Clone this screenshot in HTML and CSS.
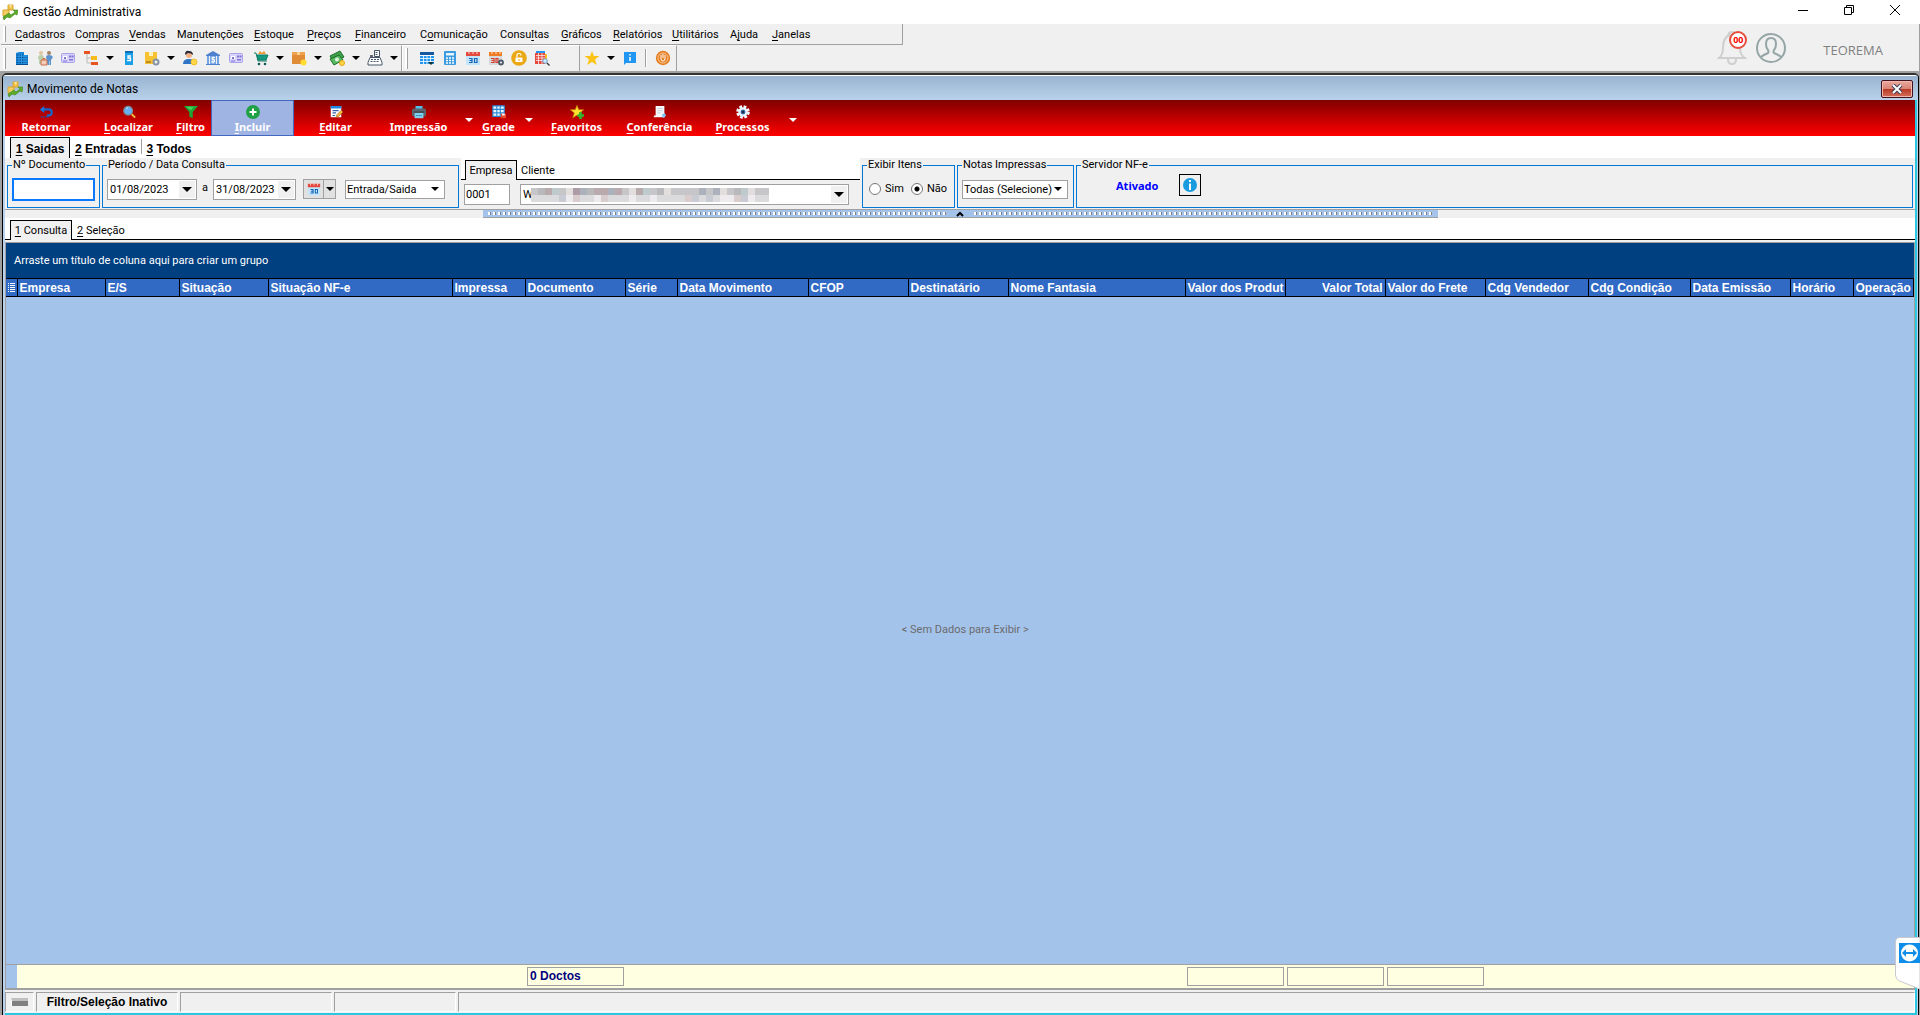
FILE: index.html
```html
<!DOCTYPE html>
<html lang="pt-BR">
<head>
<meta charset="utf-8">
<title>Gestão Administrativa</title>
<link rel="stylesheet" href="styles.css">
</head>
<body>
<svg class="defs" aria-hidden="true">
  <symbol id="logo" viewBox="0 0 16 16"><path d="M6 1h5v5H6z" fill="#f0c24a" stroke="#d9a52c"/><path d="M1 6h6v6H1z" fill="#f3cd62" stroke="#d9a52c"/><path d="M7 1h3l-1 3z" fill="#fbe7a6"/><path d="M1 13l6-4 2 2 4-3-2-2 5 0-1 5-2-1-5 4-3-1-3 3z" fill="#5dab2b" stroke="#3c8418" stroke-width=".6"/></symbol>
  <symbol id="building" viewBox="0 0 16 16"><path d="M2 3l3-1h5v3h4v9H2z" fill="#1487d8"/><path d="M2.500 5h7M2.500 7.500h11M2.500 10h11M2.500 12.500h11" stroke="#0a4c94"/><path d="M5 4v9M7.500 4v9M10 5v9M12 5v9" stroke="#3aa4ec" stroke-width=".8"/><path d="M2 14.500h12" stroke="#0a4c94"/></symbol>
  <symbol id="people" viewBox="0 0 16 16"><circle cx="4" cy="3" r="2" fill="#e0c6a0"/><circle cx="12" cy="3" r="2" fill="#a58463"/><path d="M1 8q0-3 3-3t3 3v6H2v-4z" fill="#b9cfae"/><path d="M9 7q0-2 3-2t4 2l-2 3v5h-1.500v-4H12v4h-1.500z" fill="#5b93cf"/><path d="M4 10h6v5H4z" fill="#f5cdb8" stroke="#c96f4c"/><path d="M6 10V8.500h2V10" fill="none" stroke="#c96f4c"/></symbol>
  <symbol id="card" viewBox="0 0 16 16"><rect x="1.500" y="3.500" width="13" height="9" rx="1" fill="#d6d2fb" stroke="#a8a2ea"/><path d="M3 6h4v3H3z" fill="#fff"/><path d="M4 7h2v2H4zM9 5.500h2.500v2H9zM12 5.500h1.500v2H12zM9 9h4v1.500H9z" fill="#7d76cf"/><path d="M3 11h4" stroke="#7d76cf"/></symbol>
  <symbol id="tree" viewBox="0 0 16 16"><path d="M4 4v9h5M4 8h5" fill="none" stroke="#b9b9b9"/><path d="M1 1h6v3H1zM8 12h7v3H8z" fill="#e8541f"/><path d="M8 6h6v4H8z" fill="#f6bb1c"/></symbol>
  <symbol id="price" viewBox="0 0 16 16"><path d="M4 1h8v14H4z" fill="#1b9fe8"/><path d="M4 1h8v2H4z" fill="#0b6fb8"/><path d="M10 6H7v2h2.500v2.500H6" fill="none" stroke="#fff" stroke-width="1.300"/></symbol>
  <symbol id="boxgear" viewBox="0 0 16 16"><path d="M1 2h12v12H1z" fill="#f7c232"/><path d="M5 2h4v4H5z" fill="#fff2bd"/><path d="M2 12h5" stroke="#7a5a12"/><circle cx="12" cy="12" r="2.500" fill="#eee" stroke="#8793a5" stroke-width="2"/></symbol>
  <symbol id="personcoin" viewBox="0 0 16 16"><circle cx="7" cy="5" r="3" fill="#f4b183"/><path d="M3 5q0-5 4-4 4 0 4 4-2-2-5-2z" fill="#2c2c3c"/><path d="M1 14q0-5 6-5t6 5z" fill="#2e75c8"/><circle cx="12" cy="12" r="3" fill="#ffd54a" stroke="#f3bd2c"/></symbol>
  <symbol id="bank" viewBox="0 0 16 16"><path d="M1 5l7-4 7 4v1H1zM1 14h14v1H1z" fill="#4e82cf"/><path d="M2 6h2v8H2zM12 6h2v8h-2zM5 6h6v8H5z" fill="#72a3e4"/><path d="M10 7.500H7v2h2.500v2.500H6M8 6.500v7" fill="none" stroke="#fff"/></symbol>
  <symbol id="cart" viewBox="0 0 16 16"><path d="M5 4l2-3 2 2 2-2 2 3z" fill="#f0962e"/><path d="M1 3h2l2 8h9" fill="none" stroke="#0f7d67"/><path d="M4 5h11l-2 5H5z" fill="#159a80" stroke="#0f7d67"/><circle cx="6" cy="14" r="1.300" fill="#155"/><circle cx="12" cy="14" r="1.300" fill="#155"/></symbol>
  <symbol id="boxcoin" viewBox="0 0 16 16"><path d="M1 2h13v12H1z" fill="#e08b35"/><path d="M1 2h13v3H1z" fill="#efa24e"/><path d="M6 2h3v3H6z" fill="#f9cf90"/><circle cx="12.500" cy="12.500" r="3" fill="#ffdc2e"/></symbol>
  <symbol id="money" viewBox="0 0 16 16"><path d="M1 6l10-5 4 6-10 6z" fill="#3fa24a" stroke="#1f6e2c"/><path d="M1 9l9-4 4 5-9 5z" fill="#57b960" stroke="#1f6e2c"/><circle cx="8" cy="9.500" r="2" fill="#dff3df"/><circle cx="13" cy="13" r="2.500" fill="#ffd54a" stroke="#e8a812"/></symbol>
  <symbol id="register" viewBox="0 0 16 16"><path d="M7.500.5h5v6h-5zM3 7.500h10l2 5v2.500H1v-2.500z" fill="#fff" stroke="#445568"/><path d="M8.500 2.500h3M8.500 4.500h3M4 9.500h8M3.500 11.500h9" stroke="#445568" stroke-dasharray="2 1"/><path d="M3 5h3v2H3z" fill="#667"/></symbol>
  <symbol id="calblue" viewBox="0 0 16 16"><path d="M1 2h14v3H1z" fill="#17599f"/><path d="M1 6h14v8H1z" fill="#2196f3"/><path d="M1 5.500h14M1 8.500h14M1 11.500h14M4.500 6v8M8 6v8M11.500 6v8" stroke="#fff" stroke-width=".8"/><path d="M9 12h6l-3 3z" fill="#133"/></symbol>
  <symbol id="calc" viewBox="0 0 16 16"><rect x="2" y="1" width="12" height="14" rx="1" fill="#3d9be0"/><path d="M4 3h8v2.500H4z" fill="#e6f5ff"/><path d="M4 8h8M4 10.500h8M4 13h8" stroke="#fff" stroke-width="1.500" stroke-dasharray="2 1"/></symbol>
  <symbol id="cal30" viewBox="0 0 16 16"><path d="M1 5h14v10H1z" fill="#c4e4f9"/><path d="M1 2h14v4H1z" fill="#e5483c"/><path d="M4 1v3M8 1v3M12 1v3" stroke="#f6d2cf"/><path d="M4 8.500h3v4H4M4.500 10.500H7M9.500 8.500h2.500v4H9.500z" fill="none" stroke="#1565b5" stroke-width="1.200"/></symbol>
  <symbol id="cal30gear" viewBox="0 0 16 16"><path d="M1 5h13v10H1z" fill="#d6d9dc"/><path d="M1 2h13v4H1z" fill="#ef7b22"/><path d="M4 1v3M8 1v3M12 1v3" stroke="#fbdcc0"/><path d="M3 8.500h3v4H3M3.500 10.500H6M8 8.500h2v4H8z" fill="none" stroke="#d93c2b" stroke-width="1.200"/><circle cx="13" cy="12.500" r="2" fill="#eee" stroke="#4a5a68" stroke-width="1.800"/></symbol>
  <symbol id="lock" viewBox="0 0 16 16"><circle cx="8" cy="8" r="7.800" fill="#e9a814"/><path d="M4.500 7.500h7v4.500h-7z" fill="#fff"/><path d="M6 7V5.500q0-2 2-2t2 2" fill="none" stroke="#fff" stroke-width="1.200"/><path d="M8 9v2" stroke="#e9a814"/></symbol>
  <symbol id="gridfind" viewBox="0 0 16 16"><path d="M2 1h9v3H2z" fill="#2196f3"/><path d="M1 3h10v11H1z" fill="#e5483c"/><path d="M2 5.500h9M2 8h9M2 10.500h9M4.500 3v11M8 3v11" stroke="#fff" stroke-width=".7"/><path d="M11 4h2v5h-2z" fill="#f9b928"/><circle cx="11" cy="11" r="2.300" fill="#cfeaff" stroke="#6c9bc0"/><path d="M13 13l2.500 2.500" stroke="#333" stroke-width="1.300"/></symbol>
  <symbol id="star" viewBox="0 0 16 16"><path d="M8 1l2 5h5.500l-4.500 3.500L12.800 15 8 12l-4.800 3L5 9.500.5 6H6z" fill="#fcc419"/></symbol>
  <symbol id="info" viewBox="0 0 16 16"><path d="M2 2h12v11H4l-2 2z" fill="#2196f3"/><path d="M8 4v1.500M8 7v4" stroke="#fff" stroke-width="1.500"/></symbol>
  <symbol id="power" viewBox="0 0 16 16"><circle cx="8" cy="8" r="7.200" fill="#e67e22"/><circle cx="8" cy="8" r="5" fill="none" stroke="#fbd9b4" stroke-width=".8"/><path d="M6 5v4q0 2 2 2t2-2V5M8 4v4" fill="none" stroke="#fff"/></symbol>
  <symbol id="undo" viewBox="0 0 16 16"><path d="M4 5h7q3.500 0 3.500 3.500T11 12H9" fill="none" stroke="#1665c9" stroke-width="2.600"/><path d="M1 5l5-4v8z" fill="#1b74da"/><path d="M2 13.500h9" stroke="#1b4fae" stroke-width="2" stroke-dasharray="1 1"/></symbol>
  <symbol id="magnify" viewBox="0 0 16 16"><circle cx="7" cy="6.500" r="5" fill="#64b0f2" stroke="#7b8794" stroke-width="1.400"/><path d="M5 4l2-1" stroke="#e3f3ff"/><path d="M11 10.500l4 4" stroke="#f3c33c" stroke-width="2.200"/></symbol>
  <symbol id="funnel" viewBox="0 0 16 16"><path d="M0 1h16L10 8v7l-4-2V8z" fill="#1fa436"/><path d="M2 2h9L8 6z" fill="#46d35c"/></symbol>
  <symbol id="plus" viewBox="0 0 16 16"><circle cx="8" cy="8" r="8" fill="#1ea045"/><path d="M8 4v8M4 8h8" stroke="#fff" stroke-width="2.200"/></symbol>
  <symbol id="edit" viewBox="0 0 16 16"><path d="M2 1h12v13H2z" fill="#fff"/><path d="M2 1h12v3H2z" fill="#1e88e5"/><path d="M4 6.500h7M4 9h4M4 12h3" stroke="#3563a8" stroke-width="1.300"/><path d="M8 14l1-3 5-5 2 2-5 5z" fill="#f6b73c" stroke="#8a5a1a" stroke-width=".6"/></symbol>
  <symbol id="printer" viewBox="0 0 16 16"><path d="M4 1h8v4H4z" fill="#51bfe8"/><rect y="4" width="16" height="9" rx="2" fill="#5b6670"/><path d="M3 9h10v6H3z" fill="#7fd2f2"/><path d="M2 8h12" stroke="#2d353c"/><path d="M4.500 12h7" stroke="#3b8bb0"/></symbol>
  <symbol id="gridlock" viewBox="0 0 16 16"><path d="M1 1h13v12H1z" fill="#e9f6ff"/><path d="M1 1h13v12H1zM1 5h13M1 9h13M5.500 1v12M9.500 1v12" fill="none" stroke="#2a8ad8" stroke-width="1.300"/><path d="M10 10h6v5h-6z" fill="#e5482b"/><path d="M11.500 10h3v2h-3z" fill="#fff"/></symbol>
  <symbol id="starplus" viewBox="0 0 16 16"><path d="M8 .5l2 5h5.500l-4.500 3.500 1.800 5.500L8 11.500l-4.800 3L5 9 .5 5.500H6z" fill="#ffe32e" stroke="#cf8f0c" stroke-width=".8"/><path d="M12 8v8M8.500 12H16" stroke="#2eb82e" stroke-width="3"/></symbol>
  <symbol id="sheet" viewBox="0 0 16 16"><path d="M3 1h10v13H1v-2h2z" fill="#f4f8fb"/><path d="M5 4h6M5 6.500h6M5 9h4" stroke="#c3ced8"/><path d="M10 11l3-2 2 3-3 3z" fill="#7fc4f0"/></symbol>
  <symbol id="gear" viewBox="0 0 16 16"><circle cx="8" cy="8" r="6" fill="none" stroke="#f4faff" stroke-width="3.500" stroke-dasharray="3 1.710"/><circle cx="8" cy="8" r="4" fill="none" stroke="#e6f4ff" stroke-width="3"/><circle cx="8" cy="8" r="2.200" fill="#1d2740" stroke="#2a8ad8"/></symbol>
</svg>

<header class="titlebar">
  <svg class="ico"><use href="#logo"/></svg>
  <h1>Gestão Administrativa</h1>
  <div class="winbtns">
    <button aria-label="Minimizar"><svg width="12" height="12"><path d="M1 6.500h10" stroke="#000"/></svg></button>
    <button aria-label="Restaurar"><svg width="12" height="12" fill="none" stroke="#000"><path d="M1.500 3.500h7v7h-7zM3.500 3V1.500h7v7H9"/></svg></button>
    <button aria-label="Fechar"><svg width="12" height="12" stroke="#000"><path d="M1 1l10 10M11 1L1 11"/></svg></button>
  </div>
</header>

<div class="topzone">
  <div class="bars">
    <nav class="menu">
      <a href="#"><u>C</u>adastros</a><a href="#">Co<u>m</u>pras</a><a href="#"><u>V</u>endas</a><a href="#">Ma<u>n</u>utenções</a><a href="#"><u>E</u>stoque</a><a href="#"><u>P</u>reços</a><a href="#"><u>F</u>inanceiro</a><a href="#">C<u>o</u>municação</a><a href="#">Consu<u>l</u>tas</a><a href="#"><u>G</u>ráficos</a><a href="#"><u>R</u>elatórios</a><a href="#"><u>U</u>tilitários</a><a href="#">A<u>j</u>uda</a><a href="#"><u>J</u>anelas</a>
    </nav>
    <div class="toolrow">
      <div class="tools">
        <button aria-label="Empresas"><svg class="ico"><use href="#building"/></svg></button>
        <button aria-label="Clientes"><svg class="ico"><use href="#people"/></svg></button>
        <button aria-label="Cadastro"><svg class="ico"><use href="#card"/></svg></button>
        <button aria-label="Estrutura"><svg class="ico"><use href="#tree"/></svg></button>
        <button class="drop" aria-label="Mais"></button>
        <button aria-label="Tabela de preços"><svg class="ico"><use href="#price"/></svg></button>
        <button aria-label="Produtos"><svg class="ico"><use href="#boxgear"/></svg></button>
        <button class="drop" aria-label="Mais"></button>
        <button aria-label="Vendedores"><svg class="ico"><use href="#personcoin"/></svg></button>
        <button aria-label="Bancos"><svg class="ico"><use href="#bank"/></svg></button>
        <button aria-label="Contas"><svg class="ico"><use href="#card"/></svg></button>
        <span class="space"></span>
        <button aria-label="Compras"><svg class="ico"><use href="#cart"/></svg></button>
        <button class="drop" aria-label="Mais"></button>
        <button aria-label="Vendas"><svg class="ico"><use href="#boxcoin"/></svg></button>
        <button class="drop" aria-label="Mais"></button>
        <button aria-label="Financeiro"><svg class="ico"><use href="#money"/></svg></button>
        <button class="drop" aria-label="Mais"></button>
        <button aria-label="Caixa"><svg class="ico"><use href="#register"/></svg></button>
        <button class="drop" aria-label="Mais"></button>
      </div>
      <div class="tools second">
        <button aria-label="Calendário"><svg class="ico"><use href="#calblue"/></svg></button>
        <button aria-label="Calculadora"><svg class="ico"><use href="#calc"/></svg></button>
        <button aria-label="Agenda"><svg class="ico"><use href="#cal30"/></svg></button>
        <button aria-label="Configurar agenda"><svg class="ico"><use href="#cal30gear"/></svg></button>
        <button aria-label="Bloquear"><svg class="ico"><use href="#lock"/></svg></button>
        <button aria-label="Pesquisar"><svg class="ico"><use href="#gridfind"/></svg></button>
      </div>
      <div class="tools third">
        <button aria-label="Favoritos"><svg class="ico"><use href="#star"/></svg></button>
        <button class="drop" aria-label="Mais"></button>
        <button aria-label="Informações"><svg class="ico"><use href="#info"/></svg></button>
        <span class="sep"></span>
        <button aria-label="Sair"><svg class="ico"><use href="#power"/></svg></button>
      </div>
    </div>
  </div>
  <div class="user">
    <button class="bell" aria-label="Notificações"><svg width="30" height="34" fill="none" stroke="#cfcfcf" stroke-width="2"><path d="M11 4q1-3 4-3t3 3M2 27q4-3 4-10Q6 5 14 4q9 1 9 13 0 7 5 10zM11 28q0 5 4 5t4-5"/></svg><span class="badge">00</span></button>
    <button aria-label="Perfil"><svg width="30" height="30" fill="none" stroke="#95a5a6" stroke-width="2"><circle cx="15" cy="15" r="14"/><path d="M5 24q2-2 7-4 1-1 0-3-2-2-2-6 0-6 5-6t5 6q0 4-2 6-1 2 0 3 5 2 7 4"/></svg></button>
    <span class="username">TEOREMA</span>
  </div>
</div>

<main class="mdi">
  <section class="child">
    <div class="caption">
      <svg class="ico"><use href="#logo"/></svg>
      <h2>Movimento de Notas</h2>
      <button class="close" aria-label="Fechar"><svg width="12" height="10"><path d="M2 1l8 8M10 1L2 9" stroke="#3b3f5c" stroke-width="4"/><path d="M2 1l8 8M10 1L2 9" stroke="#fff" stroke-width="2"/></svg></button>
    </div>
    <div class="content">
      <div class="actions">
        <button><svg class="ico"><use href="#undo"/></svg><span>Retornar</span></button>
        <button><svg class="ico"><use href="#magnify"/></svg><span><u>L</u>ocalizar</span></button>
        <button><svg class="ico"><use href="#funnel"/></svg><span><u>F</u>iltro</span></button>
        <button class="hot"><svg class="ico"><use href="#plus"/></svg><span><u>I</u>ncluir</span></button>
        <button><svg class="ico"><use href="#edit"/></svg><span><u>E</u>ditar</span></button>
        <button><svg class="ico"><use href="#printer"/></svg><span>Imp<u>r</u>essão</span></button>
        <button class="drop" aria-label="Opções de impressão"></button>
        <button><svg class="ico"><use href="#gridlock"/></svg><span><u>G</u>rade</span></button>
        <button class="drop" aria-label="Opções de grade"></button>
        <button><svg class="ico"><use href="#starplus"/></svg><span><u>F</u>avoritos</span></button>
        <button><svg class="ico"><use href="#sheet"/></svg><span><u>C</u>onferência</span></button>
        <button><svg class="ico"><use href="#gear"/></svg><span><u>P</u>rocessos</span></button>
        <button class="drop" aria-label="Opções de processos"></button>
      </div>

      <div class="tabs bold">
        <button class="tab on"><u>1</u> Saidas</button><button class="tab"><u>2</u> Entradas</button><button class="tab split"><u>3</u> Todos</button>
      </div>

      <form class="filters">
        <fieldset class="doc"><legend>Nº Documento</legend><input type="text" aria-label="Nº Documento"></fieldset>
        <fieldset class="period"><legend>Período / Data Consulta</legend>
          <span class="combo date"><input type="text" value="01/08/2023" aria-label="Data inicial"><button type="button" class="drop" aria-label="Abrir"></button></span>
          <span class="until">a</span>
          <span class="combo date2"><input type="text" value="31/08/2023" aria-label="Data final"><button type="button" class="drop" aria-label="Abrir"></button></span>
          <span class="calbtn"><button type="button" aria-label="Calendário"><svg class="ico"><use href="#cal30"/></svg></button><button type="button" class="drop" aria-label="Períodos"></button></span>
          <span class="pick"><select aria-label="Tipo de data"><option>Entrada/Saida</option></select></span>
        </fieldset>
        <div class="client">
          <div class="tabs small"><button type="button" class="tab on">Empresa</button><button type="button" class="tab">Cliente</button></div>
          <div class="clientrow">
            <input type="text" class="code" value="0001" aria-label="Empresa">
            <span class="combo name"><input type="text" value="W" aria-label="Cliente">
              <svg class="mosaic" viewBox="0 0 34 2" preserveAspectRatio="none" shape-rendering="crispEdges" aria-hidden="true">
                <path fill="#c6c6c8" d="M0 0h34v1H0z"/>
                <path fill="#dbdbde" d="M0 1h34v1H0z"/>
                <path fill="#b9b9bb" d="M1 0h1v1h-1zM8 0h1v1h-1zM18 0h1v1h-1zM29 0h1v1h-1z"/>
                <path fill="#b9abad" d="M2 0h1v1h-1zM9 0h1v1h-1zM10 0h1v1h-1zM12 0h1v1h-1zM15 0h1v1h-1z"/>
                <path fill="#ad9ca8" d="M6 0h1v1h-1z"/>
                <path fill="#acb1bb" d="M7 0h1v1h-1zM11 0h1v1h-1zM24 0h1v1h-1zM26 0h1v1h-1z"/>
                <path fill="#e2dedd" d="M5 0h1v1h-1zM14 0h1v1h-1zM19 0h1v1h-1zM27 0h1v1h-1zM31 0h1v1h-1z"/>
                <path fill="#bfcacd" d="M3 0h1v1h-1zM16 0h1v1h-1zM30 0h1v1h-1z"/>
                <path fill="#eeebee" d="M5 1h1v1h-1zM9 1h1v1h-1zM14 1h1v1h-1zM17 1h1v1h-1zM27 1h2v1h-2zM31 1h1v1h-1z"/>
                <path fill="#c8cbd4" d="M4 1h1v1h-1zM23 1h1v1h-1zM25 1h1v1h-1zM30 1h1v1h-1z"/>
                <path fill="#d8cccd" d="M6 1h1v1h-1zM10 1h1v1h-1zM22 1h1v1h-1zM29 1h1v1h-1z"/>
              </svg><button type="button" class="drop" aria-label="Abrir"></button></span>
          </div>
        </div>
        <fieldset class="items"><legend>Exibir Itens</legend>
          <label><input type="radio" name="itens">Sim</label><label><input type="radio" name="itens" checked>Não</label>
        </fieldset>
        <fieldset class="printed"><legend>Notas Impressas</legend><span class="pick"><select aria-label="Notas Impressas"><option>Todas (Selecione)</option></select></span></fieldset>
        <fieldset class="server"><legend>Servidor NF-e</legend><strong>Ativado</strong>
          <button type="button" aria-label="Informações do servidor"><svg width="16" height="16"><circle cx="8" cy="8" r="7" fill="#1a9be0"/><path d="M8 3v2M8 6.500V13" stroke="#fff" stroke-width="2"/></svg></button>
        </fieldset>
      </form>

      <div class="splitter"><div class="grip"><i></i><button aria-label="Recolher filtros"><svg width="8" height="6" fill="none" stroke="#000" stroke-width="2"><path d="M1 5l3-3 3 3"/></svg></button><i></i></div></div>

      <div class="tabs views"><button class="tab on"><u>1</u> Consulta</button><button class="tab"><u>2</u> Seleção</button></div>

      <div class="grid">
        <div class="groupbox">Arraste um título de coluna aqui para criar um grupo</div>
        <table>
          <colgroup><col class="w11"><col class="w88"><col class="w74"><col class="w89"><col class="w184"><col class="w73"><col class="w100"><col class="w52"><col class="w131"><col class="w100"><col class="w100"><col class="w177"><col class="w100"><col class="w100"><col class="w100"><col class="w103"><col class="w102"><col class="w100"><col class="w63"><col></colgroup>
          <thead><tr><th class="mark" aria-label="Colunas"><svg width="7" height="9" stroke="#fff"><path d="M0 .5h1M2 .5h5M0 2.500h1M2 2.500h5M0 4.500h1M2 4.500h5M0 6.500h1M2 6.500h5M0 8.500h1M2 8.500h5"/></svg></th><th>Empresa</th><th>E/S</th><th>Situação</th><th>Situação NF-e</th><th>Impressa</th><th>Documento</th><th>Série</th><th>Data Movimento</th><th>CFOP</th><th>Destinatário</th><th>Nome Fantasia</th><th>Valor dos Produt</th><th class="num">Valor Total</th><th>Valor do Frete</th><th>Cdg Vendedor</th><th>Cdg Condição</th><th>Data Emissão</th><th>Horário</th><th>Operação</th></tr></thead>
          <tbody><tr><td></td><td colspan="19">&lt; Sem Dados para Exibir &gt;</td></tr></tbody>
          <tfoot><tr><td class="mark"></td><td colspan="5"></td><td><output>0 Doctos</output></td><td colspan="5"></td><td><output></output></td><td><output></output></td><td><output></output></td><td colspan="5"></td></tr></tfoot>
        </table>
      </div>

      <footer class="status"><span class="led"><i></i></span><span class="state">Filtro/Seleção Inativo</span><span class="s3"></span><span class="s4"></span><span class="s5"></span></footer>
    </div>
  </section>
</main>
<button class="remote" aria-label="Acesso remoto"><svg width="25" height="52"><path d="M25 .5H5Q.5.500.5 5v33q0 4 4 6l20 8h.5z" fill="#fff" stroke="#c8c8d0"/><path d="M4 6h21v20H4z" fill="#0e8ee9"/><ellipse cx="14.500" cy="16" rx="8.500" ry="8.500" fill="#fff"/><path d="M7 16l4-4v3h7v-3l4 4-4 4v-3h-7v3z" fill="#0e8ee9"/></svg></button>
</body>
</html>
```
FILE: styles.css
```css
* { box-sizing: border-box; }
body {
  margin: 0;
  height: 100vh;
  display: flex;
  flex-direction: column;
  overflow: hidden;
  background: #f0f0f0;
  color: #000;
  font: 11px/14px Roboto, sans-serif;
}
button, input, select { font: inherit; color: inherit; margin: 0; padding: 0; border: 0; border-radius: 0; background: none; }
input { outline: 0; min-width: 0; }
a { color: inherit; text-decoration: none; }
u { text-underline-offset: 2px; }
svg { display: block; flex: none; }
.defs { position: absolute; width: 0; height: 0; }
.ico { width: 16px; height: 16px; }
.drop { display: flex; align-items: center; justify-content: center; }
.drop::before { content: ""; border: 4px solid transparent; border-top-color: currentColor; border-bottom: 0; }

/* application window */
.titlebar { display: flex; align-items: center; height: 24px; padding-left: 2px; background: #fff; flex: none; }
h1, h2 { margin: 0; font: 12px/16px Roboto, sans-serif; }
.titlebar h1 { margin-left: 5px; }
.winbtns { display: flex; margin-left: auto; padding: 0 2px 4px 0; }
.winbtns button { width: 46px; height: 20px; display: grid; place-items: center; }

.topzone { display: flex; justify-content: space-between; height: 47px; flex: none; border-right: 1px solid #a0a0a0; }
.bars { display: flex; flex-direction: column; align-items: flex-start; padding-left: 1px; }
.menu {
  position: relative;
  display: grid;
  grid-template-columns: 60px 54px 48px 77px 53px 48px 65px 80px 61px 52px 59px 58px 42px 130px;
  align-items: center;
  height: 21px;
  padding: 2px 0 0 14px;
  border-right: 1px solid #a0a0a0;
  border-bottom: 1px solid #a0a0a0;
  white-space: nowrap;
}
.menu::before, .tools:not(.third)::before {
  content: "";
  position: absolute;
  left: 2px;
  top: 2px;
  bottom: 2px;
  width: 2px;
  background: #fff;
  border-right: 1px solid #a0a0a0;
}
.toolrow { display: flex; height: 26px; }
.tools { position: relative; display: flex; align-items: center; padding: 0 0 2px 9px; border-top: 1px solid #fff; border-right: 1px solid #a0a0a0; }
.tools button { width: 23px; height: 22px; display: flex; align-items: center; justify-content: center; }
.tools .drop { width: 15px; }
.space { width: 2px; }
.second { padding: 0 26px 2px 12px; border-left: 1px solid #fff; }
.third { padding: 0 2px 2px 0; }
.sep { width: 2px; height: 18px; margin: 0 4px; background: #fff; border-left: 1px solid #a0a0a0; }

.user { display: flex; align-items: center; }
.bell { position: relative; margin-right: 9px; }
.badge {
  position: absolute;
  left: 12px;
  top: 0;
  width: 18px;
  height: 18px;
  border: 2px solid #e74c3c;
  border-radius: 50%;
  background: #fff;
  color: #f00;
  font: bold 9px/14px "Open Sans", sans-serif;
  text-align: center;
}
.username { margin: 4px 36px 0 37px; color: #808080; font: 13px/18px "Open Sans", sans-serif; }

/* document window */
.mdi { flex: 1; min-height: 0; display: flex; background: #a0a0a0; padding: 2px 1px 0 2px; }
.child { flex: 1; min-width: 0; display: flex; flex-direction: column; border: 1px solid #000; border-top: 2px solid #333; border-bottom: 0; border-radius: 5px 5px 0 0; background: #b9d1ea; overflow: hidden; }
.caption { display: flex; align-items: center; height: 25px; flex: none; padding: 1px 5px 0 4px; border-top: 1px solid #fff; background: linear-gradient(#99b4d1, #b9d1ea); }
.caption h2 { margin-left: 4px; }
.close { width: 32px; height: 18px; margin-left: auto; display: grid; place-items: center; border: 1px solid #431020; border-radius: 2px; background: linear-gradient(#e9a99d, #d98476 48%, #b93a25 52%, #d5705c); box-shadow: inset 0 0 0 1px #f0b9ae; }
.content { flex: 1; min-height: 0; display: flex; flex-direction: column; margin: 0 3px 0 2px; background: #f0f0f0; border-bottom: 2px solid #2bc6e0; box-shadow: 2px 0 0 #2bc6e0; }

.actions { display: grid; grid-template-columns: 82px 83px 41px 83px 83px 83px 17px 43px 17px 79px 87px 79px 21px; height: 36px; flex: none; background: linear-gradient(#800000, #f00); color: #fff; font: bold 11px/15px "Noto Sans", sans-serif; }
.actions button { display: flex; flex-direction: column; align-items: center; justify-content: flex-start; padding-top: 5px; }
.actions .ico { width: 14px; height: 14px; }
.actions .hot { background: #a0b4e4; border: 1px solid #4468c0; padding-top: 4px; }
.actions .drop { padding-top: 18px; }

.tabs { display: flex; align-items: stretch; flex: none; background: #fff; padding-left: 5px; }
.tab { padding: 0 5px; white-space: nowrap; }
.tab.on { border: 1px solid #000; border-width: 1px 1px 0; background: #f0f0f0; }
.bold { height: 22px; padding-top: 1px; font: bold 12px/16px "Liberation Sans", sans-serif; }
.bold .tab { padding-top: 2px; }
.bold .on { width: 60px; padding: 1px 0 0; }
.split { position: relative; }
.split::before { content: ""; position: absolute; left: 0; top: 2px; bottom: 4px; border-left: 1px solid #a0a0a0; }

.filters { display: flex; gap: 2px; height: 52px; flex: none; padding: 0 2px 1px 2px; border-bottom: 1px solid #a0a0a0; }
fieldset { min-width: 0; margin: 0; padding: 0 4px; height: 50px; border: 1px solid #0078d7; flex: none; }
legend { padding: 0 1px; line-height: 14px; }
.doc { width: 93px; }
.doc input { display: block; width: 83px; height: 23px; margin-top: 6px; border: 2px solid #0a78ff; background: #fff; }
.period { width: 357px; white-space: nowrap; }
.period > span { float: left; }
.combo { display: inline-flex; height: 21px; padding: 1px; border: 1px solid #a0a0a0; background: #fff; }
.combo input { flex: 1; padding-left: 1px; }
.combo .drop { width: 16px; background: #f0f0f0; }
.combo .drop::before { border-width: 5px 5px 0; }
.date { width: 90px; margin-top: 7px; }
.date2 { width: 83px; margin-top: 7px; }
.until { width: 16px; text-align: center; margin-top: 9px; }
.calbtn { display: flex; width: 33px; height: 20px; margin: 7px 9px 0 7px; border: 1px solid #a0a0a0; background: #e1e1e1; }
.calbtn button:first-child { width: 20px; padding-left: 3px; border-right: 1px solid #a0a0a0; }
.calbtn .ico { width: 14px; height: 14px; }
.calbtn .drop { flex: 1; }
.pick { position: relative; display: block; height: 19px; width: 100px; margin-top: 8px; border: 1px solid #a0a0a0; background: #fff; }
.pick select { appearance: none; display: block; width: 100%; height: 17px; padding-left: 1px; outline: 0; }
.pick::after { content: ""; position: absolute; right: 5px; top: 6px; border: 4px solid transparent; border-top-color: #000; border-bottom: 0; pointer-events: none; }
.client { width: 399px; background: #f0f0f0; }
.small { height: 22px; padding: 2px 0 0 4px; border-bottom: 1px solid #000; }
.small .tab { margin-bottom: -1px; padding: 1px 4px 0; }
.small .on { width: 52px; padding: 0; }
.clientrow { display: flex; gap: 10px; padding: 4px 11px 0 3px; }
.code { width: 46px; height: 21px; padding-left: 1px; border: 1px solid #a0a0a0; background: #fff; }
.name { position: relative; flex: 1; }
.mosaic { position: absolute; left: 10px; top: 3px; width: 238px; height: 14px; }
.items { width: 93px; }
.items label { float: left; display: flex; align-items: center; gap: 4px; width: 42px; margin-top: 10px; white-space: nowrap; }
.items label:first-of-type { padding-left: 2px; width: 44px; }
.items label:last-of-type { width: 38px; }
.items input { appearance: none; width: 12px; height: 12px; flex: none; border: 1px solid #777; border-radius: 50%; background: #fff; }
.items input:checked { background: radial-gradient(circle, #000 2px, #fff 3px); }
.printed .pick { width: 106px; }
.printed { width: 117px; }
.server { flex: 1; display: block; }
.server strong { float: left; width: 63px; margin: 7px 0 0 35px; color: #00f; font-family: "Noto Sans", sans-serif; }
.server button { float: left; width: 22px; height: 22px; margin-top: 2px; display: grid; place-items: center; border: 1px solid #000; }

.splitter { height: 8px; flex: none; }
.grip { display: flex; width: 50%; height: 8px; margin: 0 auto; background: #a4c3eb; border-bottom: 1px solid #a0a0a0; }
.grip i { flex: 1; margin: 2px 5px; background: repeating-linear-gradient(90deg, #fff 0 2px, #808080 2px 3px, #a4c3eb 3px 5px); }
.grip button { width: 18px; display: grid; place-items: center; }

.views { height: 22px; padding-top: 2px; border-bottom: 1px solid #000; margin-bottom: 2px; }
.views .tab { margin-bottom: -1px; padding-top: 2px; }
.views .on { width: 62px; padding: 1px 0 0; }

.grid { flex: 1; min-height: 0; display: flex; flex-direction: column; border: 1px solid #a0a0a0; border-bottom-width: 2px; background: #a4c3eb; }
.groupbox { height: 35px; flex: none; padding: 0 8px; background: #004080; color: #fff; line-height: 36px; }
table { flex: 1; width: 100%; table-layout: fixed; border-collapse: collapse; }
th, td { padding: 0; overflow: hidden; white-space: nowrap; }
th { height: 18px; padding: 0 2px; border: 1px solid #000; border-left: 0; background: #316ac5; color: #fff; font: bold 12px/16px "Liberation Sans", sans-serif; text-align: left; }
th.mark { padding-left: 2px; }
th.num { text-align: right; }
tbody td { color: #6b6b6b; text-align: center; }
tfoot { border-top: 1px solid #a0a0a0; background: #ffffe1; }
tfoot td { height: 24px; }
tfoot .mark { background: #a4c3eb; }
output { display: block; height: 19px; margin: 0 1px 0 2px; padding-left: 2px; border: 1px solid #a0a0a0; color: #000080; font: bold 12px/17px "Liberation Sans", sans-serif; }
.w11 { width: 11px; } .w88 { width: 88px; } .w74 { width: 74px; } .w89 { width: 89px; } .w184 { width: 184px; } .w73 { width: 73px; } .w100 { width: 100px; }
.w52 { width: 52px; } .w131 { width: 131px; } .w177 { width: 177px; } .w103 { width: 103px; } .w102 { width: 102px; } .w63 { width: 63px; }

.status { display: flex; gap: 2px; height: 23px; flex: none; padding: 2px 0 1px; }
.status span { border: 1px solid #fff; border-top-color: #a0a0a0; border-left-color: #a0a0a0; }
.led { width: 29px; display: grid; place-items: center; }
.led i { width: 17px; height: 8px; background: #808080; border-top: 3px solid #c0c0c0; border-left: 1px solid #fff; }
.status .state { width: 142px; text-align: center; font: bold 12px/18px "Liberation Sans", sans-serif; }
.s3 { width: 152px; }
.s4 { width: 122px; }
.s5 { flex: 1; }
.remote { position: absolute; right: 0; bottom: 26px; }
```
